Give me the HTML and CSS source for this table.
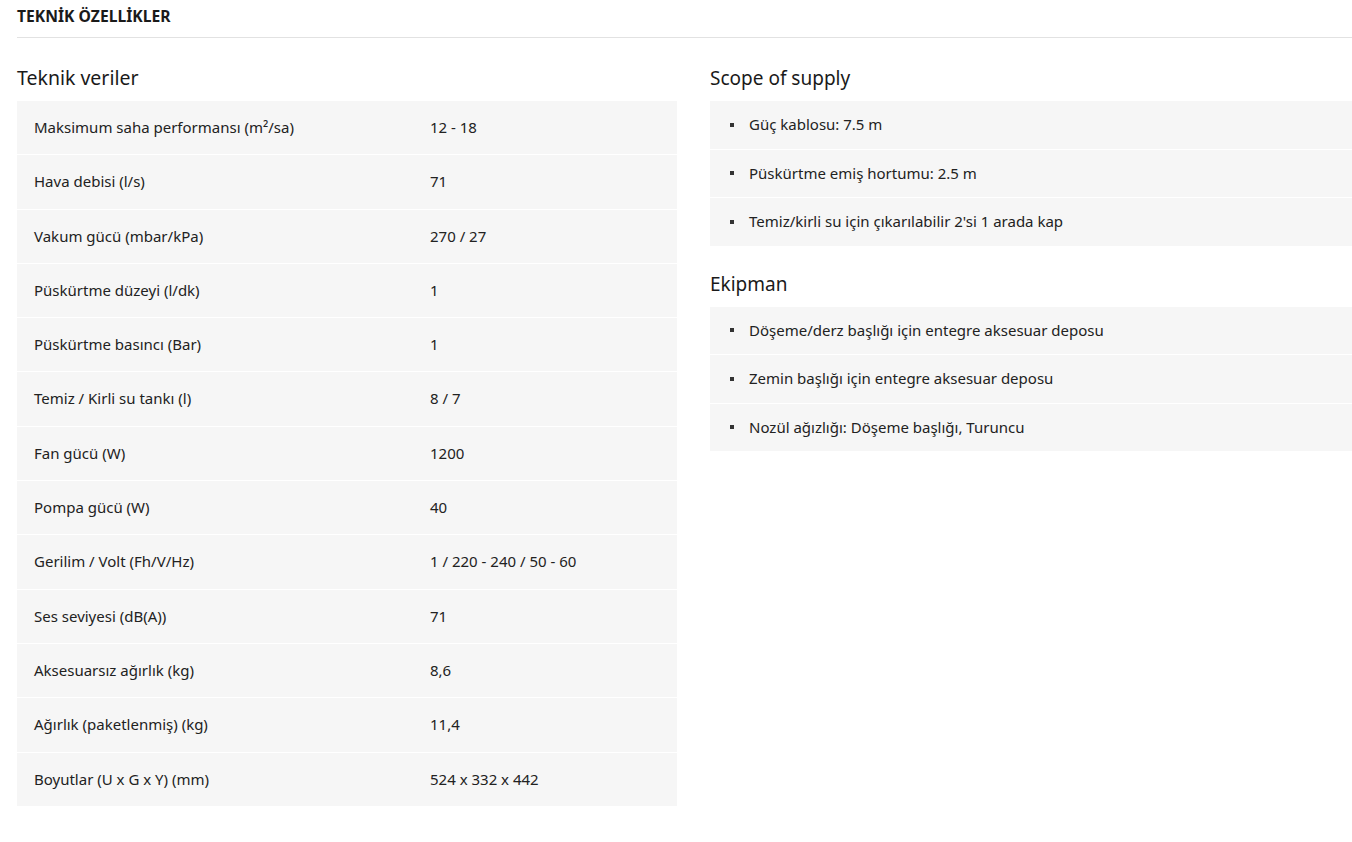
FILE: index.html
```html
<!DOCTYPE html>
<html lang="tr">
<head>
<meta charset="utf-8">
<title>Teknik Özellikler</title>
<link rel="stylesheet" href="styles.css">
</head>
<body>
<div class="page">
  <h2 class="section-title">TEKNİK ÖZELLİKLER</h2>
  <div class="columns">
    <div class="col">
      <h3 class="sub-title">Teknik veriler</h3>
      <table class="spec-table">
        <tr><td>Maksimum saha performansı (m²/sa)</td><td>12 - 18</td></tr>
        <tr><td>Hava debisi (l/s)</td><td>71</td></tr>
        <tr><td>Vakum gücü (mbar/kPa)</td><td>270 / 27</td></tr>
        <tr><td>Püskürtme düzeyi (l/dk)</td><td>1</td></tr>
        <tr><td>Püskürtme basıncı (Bar)</td><td>1</td></tr>
        <tr><td>Temiz / Kirli su tankı (l)</td><td>8 / 7</td></tr>
        <tr><td>Fan gücü (W)</td><td>1200</td></tr>
        <tr><td>Pompa gücü (W)</td><td>40</td></tr>
        <tr><td>Gerilim / Volt (Fh/V/Hz)</td><td>1 / 220 - 240 / 50 - 60</td></tr>
        <tr><td>Ses seviyesi (dB(A))</td><td>71</td></tr>
        <tr><td>Aksesuarsız ağırlık (kg)</td><td>8,6</td></tr>
        <tr><td>Ağırlık (paketlenmiş) (kg)</td><td>11,4</td></tr>
        <tr><td>Boyutlar (U x G x Y) (mm)</td><td>524 x 332 x 442</td></tr>
      </table>
    </div>
    <div class="col">
      <h3 class="sub-title">Scope of supply</h3>
      <ul class="spec-list">
        <li>Güç kablosu: 7.5 m</li>
        <li>Püskürtme emiş hortumu: 2.5 m</li>
        <li>Temiz/kirli su için çıkarılabilir 2'si 1 arada kap</li>
      </ul>
      <h3 class="sub-title sub-title--spaced">Ekipman</h3>
      <ul class="spec-list">
        <li>Döşeme/derz başlığı için entegre aksesuar deposu</li>
        <li>Zemin başlığı için entegre aksesuar deposu</li>
        <li>Nozül ağızlığı: Döşeme başlığı, Turuncu</li>
      </ul>
    </div>
  </div>
</div>
</body>
</html>
```
FILE: styles.css
```css
* { box-sizing: border-box; }
html, body { margin: 0; padding: 0; background: #fff; }
body {
  font-family: "Noto Sans", "Open Sans", sans-serif;
  color: #222;
  font-size: 15px;
}
.page {
  padding-left: 17px;
}
.section-title {
  margin: 0;
  font-size: 15.7px;
  font-weight: 700;
  line-height: 20px;
  padding: 6px 0 11px;
  color: #1a1a1a;
  border-bottom: 1px solid #e2e2e2;
}
.columns {
  display: grid;
  grid-template-columns: 660px 642px;
  column-gap: 33px;
  padding-top: 28px;
}
.sub-title {
  margin: 0 0 11px;
  font-size: 19px;
  font-weight: 400;
  line-height: 24px;
  color: #1a1a1a;
}
.col:first-child .sub-title { font-size: 19.5px; }
.sub-title--spaced {
  margin-top: 26px;
}
.spec-table {
  width: 100%;
  border-collapse: collapse;
  background: #f6f6f6;
}
.spec-table td {
  padding: 16px 17px;
  line-height: 21.3px;
  border-bottom: 1px solid #fff;
  vertical-align: middle;
}
.spec-table tr:last-child td { border-bottom: 0; }
.spec-table td:first-child { width: 60%; }
.spec-list {
  list-style: none;
  margin: 0;
  padding: 0;
  background: #f6f6f6;
}
.spec-list li {
  display: flex;
  align-items: center;
  gap: 15px;
  padding: 13px 20px;
  line-height: 21.5px;
  border-bottom: 1px solid #fff;
}
.spec-list li:last-child { border-bottom: 0; }
.spec-list li::before {
  content: "";
  width: 4px;
  height: 4px;
  background: #333;
  flex: none;
}
```
